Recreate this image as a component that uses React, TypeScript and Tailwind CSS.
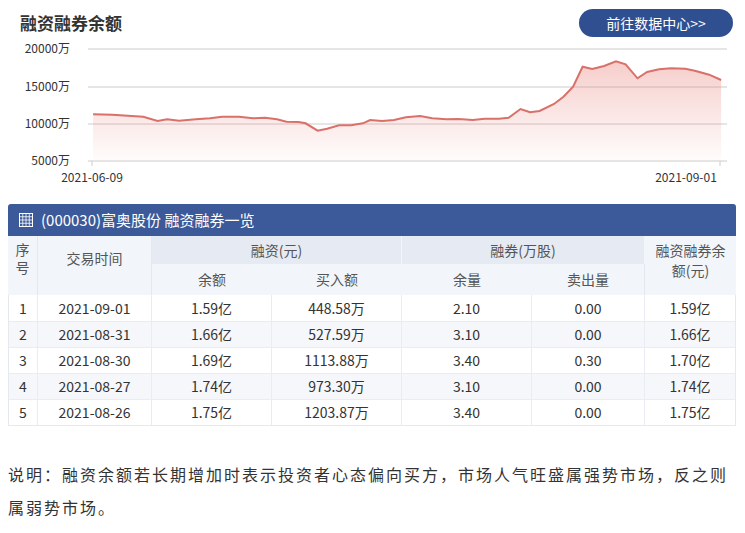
const pts: [number, number][] = [[195,343],[235,344],[300,350],[330,363],[350,358],[375,362],[410,358],[440,355],[465,350],[500,350],[530,355],[555,353],[580,358],[600,365],[625,366],[640,370],[665,392],[685,386],[710,376],[735,376],[760,370],[775,360],[800,363],[825,360],[850,352],[880,348],[905,355],[935,358],[960,357],[990,360],[1015,356],[1045,356],[1065,353],[1090,327],[1110,337],[1130,333],[1160,312],[1180,290],[1200,260],[1220,200],[1240,207],[1265,198],[1290,184],[1310,193],[1335,235],[1355,216],[1380,208],[1405,205],[1435,206],[1455,212],[1485,224],[1510,240]];
const P = pts.map(([x, y]) => [x / 2.094, y / 3]);
const line = P.map(([x, y], i) => `${i ? "L" : "M"}${x.toFixed(1)},${y.toFixed(1)}`).join(" ");
const area = `${line} L${P[P.length - 1][0].toFixed(1)},161 L${P[0][0].toFixed(1)},161 Z`;

const rows = [
  ["1", "2021-09-01", "1.59亿", "448.58万", "2.10", "0.00", "1.59亿"],
  ["2", "2021-08-31", "1.66亿", "527.59万", "3.10", "0.00", "1.66亿"],
  ["3", "2021-08-30", "1.69亿", "1113.88万", "3.40", "0.30", "1.70亿"],
  ["4", "2021-08-27", "1.74亿", "973.30万", "3.10", "0.00", "1.74亿"],
  ["5", "2021-08-26", "1.75亿", "1203.87万", "3.40", "0.00", "1.75亿"],
];

export default function App() {
  const font = { fontFamily: '"Noto Sans CJK SC", "Noto Sans", sans-serif' };
  return (
    <div className="w-[745px] h-[533px] bg-white text-[#333]" style={font}>
      <div className="flex items-center justify-between pl-[20px] pr-[12px] pt-[9px] h-[37px]">
        <div className="text-[17px] font-bold text-[#333]">融资融券余额</div>
        <div className="w-[154px] h-[28px] rounded-full bg-[#2f4f91] text-white text-[14px] flex items-center justify-center">前往数据中心&gt;&gt;</div>
      </div>
      <svg width="745" height="155" viewBox="0 37 745 155" className="block">
        <defs>
          <linearGradient id="g" x1="0" y1="0" x2="0" y2="1">
            <stop offset="0" stopColor="#e5736a" stopOpacity="0.35" />
            <stop offset="1" stopColor="#e5736a" stopOpacity="0.02" />
          </linearGradient>
        </defs>
        {[[49, "20000万"], [87, "15000万"], [124, "10000万"], [161, "5000万"]].map(([y, t]) => (
          <g key={t as string}>
            <line x1="88" x2="727" y1={y as number} y2={y as number} stroke="#ccc" strokeWidth="1" />
            <text x="70" y={(y as number) + 4} textAnchor="end" fontSize="12" fill="#333">{t}</text>
          </g>
        ))}
        <path d={area} fill="url(#g)" />
        <path d={line} fill="none" stroke="#d9706a" strokeWidth="2" />
        <line x1="92" x2="92" y1="161" y2="166" stroke="#ccc" />
        <line x1="720" x2="720" y1="161" y2="166" stroke="#ccc" />
        <text x="92" y="182" textAnchor="middle" fontSize="12" fill="#333">2021-06-09</text>
        <text x="686" y="182" textAnchor="middle" fontSize="12" fill="#333">2021-09-01</text>
      </svg>
      <div className="mx-[8px] mt-[12px] w-[728px] text-[14px]">
        <div className="h-[32px] bg-[#3c5a99] text-white flex items-center px-[11px] gap-[8px] rounded-t-[3px]">
          <svg width="14" height="14" viewBox="0 0 14 14">
            <rect x="0" y="0" width="14" height="14" fill="#fff" />
            {[0, 1, 2, 3].map(r => [0, 1, 2, 3].map(c => (
              <rect key={`${r}${c}`} x={1 + c * 3.2} y={1 + r * 3.2} width="2.4" height="2.4" fill="#3c5a99" />
            )))}
          </svg>
          <span className="text-[15px]">(000030)富奥股份 融资融券一览</span>
        </div>
        <div className="grid grid-cols-[30px_114px_120px_130px_130px_113px_91px] bg-[#f2f5fa] text-[#555] text-center">
          <div className="row-span-2 pt-[4px] leading-[18px] border-r border-[#e4e8ef]">序<br />号</div>
          <div className="row-span-2 pt-[12px] border-r border-[#e4e8ef]">交易时间</div>
          <div className="col-span-2 h-[28px] flex items-center justify-center bg-[#e6ebf3] border-r border-[#f2f5fa]">融资(元)</div>
          <div className="col-span-2 h-[28px] flex items-center justify-center bg-[#e6ebf3] border-r border-[#f2f5fa]">融券(万股)</div>
          <div className="row-span-2 pt-[4px] leading-[20px]">融资融券余<br />额(元)</div>
          <div className="h-[31px] flex items-center justify-center">余额</div>
          <div className="h-[31px] flex items-center justify-center">买入额</div>
          <div className="h-[31px] flex items-center justify-center">余量</div>
          <div className="h-[31px] flex items-center justify-center border-r border-[#e4e8ef]">卖出量</div>
        </div>
        <div className="border border-t-0 border-[#e4e8ef]">
          {rows.map((r, i) => (
            <div key={i} className={`grid grid-cols-[29px_114px_120px_130px_130px_113px_90px] h-[26px] text-[#333] text-center ${i % 2 ? "bg-[#f5f7fb]" : "bg-white"} ${i ? "border-t border-[#e9edf3]" : ""}`}>
              {r.map((c, j) => (
                <div key={j} className={`flex items-center justify-center ${j < 6 ? "border-r border-[#e9edf3]" : ""}`}>{c}</div>
              ))}
            </div>
          ))}
        </div>
      </div>
      <p className="px-[8px] mt-[32px] text-[16px] tracking-[2px] leading-[33px] text-[#333]">说明：融资余额若长期增加时表示投资者心态偏向买方，市场人气旺盛属强势市场，反之则属弱势市场。</p>
    </div>
  );
}
